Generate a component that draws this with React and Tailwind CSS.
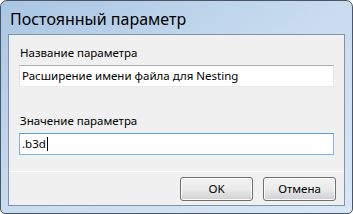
const font = { fontFamily: '"Noto Sans", "Open Sans", sans-serif' };

function Field({ label, value, focused, className }) {
    return (
        <div className={'flex flex-col ' + className}>
            <span className="text-[11.5px] leading-[14px] text-black pl-[1px]">{label}</span>
            <div
                className={
                    'mt-[5px] h-[22px] flex items-center px-[2px] text-[11.5px] text-black bg-white border ' +
                    (focused
                        ? 'border-[#7eb4ea] border-t-[#569de5]'
                        : 'border-[#e3e9ef] border-t-[#abadb3] border-l-[#e2e3ea]')
                }
            >
                <span>{value}</span>
                {focused && <span className="w-[1px] h-[14px] bg-black ml-[1px]" />}
            </div>
        </div>
    );
}

function Button({ children }) {
    return (
        <div className="w-[73px] h-[24px] rounded-[3px] border border-[#707070] bg-gradient-to-b from-[#f2f2f2] via-[#ebebeb] to-[#cfcfcf] shadow-[inset_0_0_0_1px_#fcfcfc] flex items-center justify-center text-[11.5px] text-black">
            {children}
        </div>
    );
}

export default function App() {
    return (
        <div className="w-[353px] h-[214px] bg-white" style={font}>
            <div className="w-[353px] h-[214px] rounded-t-[7px] rounded-b-[5px] border border-[#4b5563] bg-gradient-to-br from-[#a9c6e4] via-[#c9dcef] to-[#d9e7f5] flex flex-col px-[7px] pb-[7px]">
                <div className="h-[33px] flex items-center pl-[2px] pt-[2px]">
                    <span className="text-[16px] text-black">Постоянный параметр</span>
                </div>
                <div className="flex-1 border border-[#7f93ab] bg-[#f0f0f0] flex flex-col">
                    <div className="flex flex-col px-[10px] pt-[11px]">
                        <Field label="Название параметра" value="Расширение имени файла для Nesting" />
                        <Field label="Значение параметра" value=".b3d" focused className="mt-[27px]" />
                    </div>
                    <div className="mt-auto border-t border-white h-[34px] flex items-center justify-end gap-[10px] pr-[8px]">
                        <Button>OK</Button>
                        <Button>Отмена</Button>
                    </div>
                </div>
            </div>
        </div>
    );
}
